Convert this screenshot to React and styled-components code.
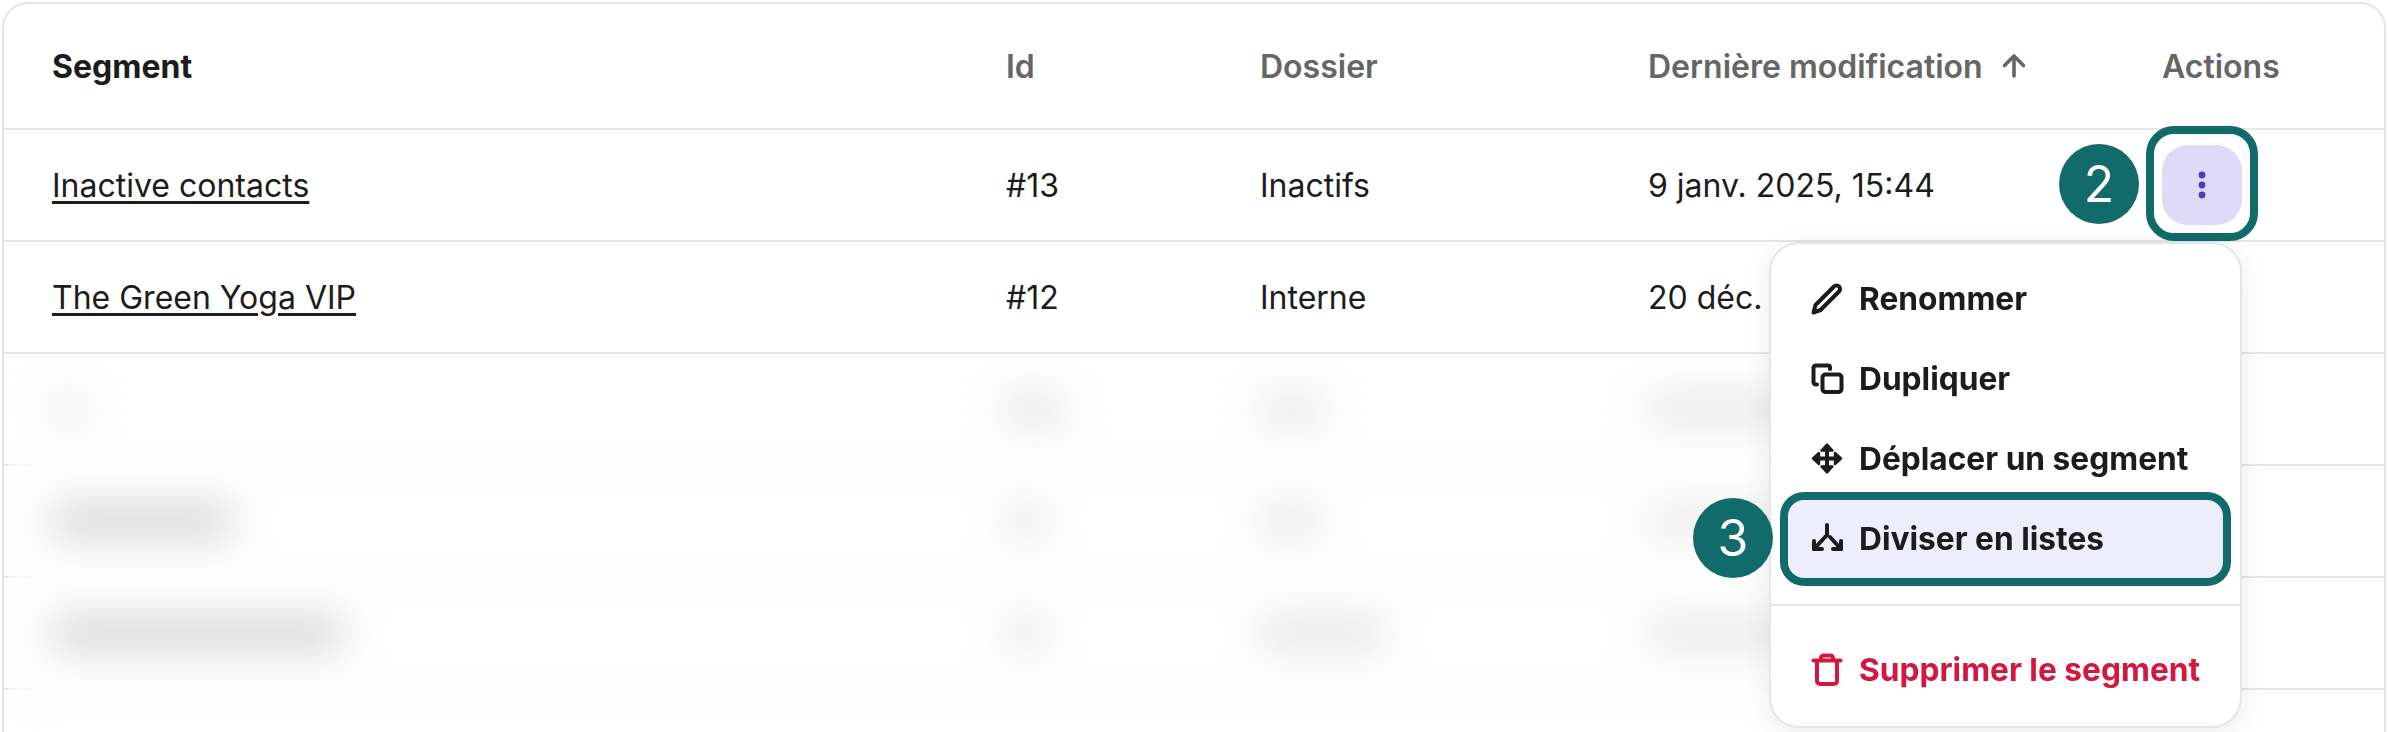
import React from "react";
import styled, { createGlobalStyle } from "styled-components";

const GlobalStyle = createGlobalStyle`
  html, body {
    margin: 0;
    height: 732px;
    overflow: hidden;
    background: #ffffff;
  }
  * { box-sizing: border-box; }
`;

const teal = "#126b6b";
const ink = "#1c1c1c";

const Card = styled.div`
  position: relative;
  margin: 2px;
  min-height: 900px;
  background: #fff;
  border: 2px solid #e5e5e5;
  border-radius: 26px;
  font-family: "Inter", "Liberation Sans", sans-serif;
  font-size: 32px;
  color: ${ink};
`;

const Row = styled.div`
  display: grid;
  grid-template-columns: 954px 254px 388px 514px 1fr;
  align-items: center;
  height: ${(p) => (p.$head ? "126px" : "112px")};
  padding-left: 48px;
  border-bottom: 2px solid #e5e5e5;
`;

const HeadCell = styled.div`
  display: flex;
  align-items: center;
  gap: 18px;
  font-weight: ${(p) => (p.$active ? 700 : 600)};
  color: ${(p) => (p.$active ? ink : "#666666")};
`;

const SegmentLink = styled.a`
  color: ${ink};
  text-decoration: underline;
  text-decoration-thickness: 3px;
  text-underline-offset: 4px;
`;

const Smudge = styled.span`
  display: block;
  width: ${(p) => p.$w}px;
  height: 24px;
  background: rgba(20, 20, 20, ${(p) => p.$a});
`;

const Veil = styled.div`
  position: absolute;
  left: 4px;
  top: 352px;
  width: 1790px;
  height: 550px;
  backdrop-filter: blur(22px);
`;

const MenuAnchor = styled.div`
  position: relative;
  width: 80px;
  height: 80px;
`;

const KebabButton = styled.button`
  position: relative;
  display: flex;
  align-items: center;
  justify-content: center;
  width: 80px;
  height: 80px;
  padding: 0;
  border: none;
  border-radius: 26px;
  background: #dedaf8;

  &::after {
    content: "";
    position: absolute;
    inset: -19px -16px -16px -16px;
    border: 8px solid ${teal};
    border-radius: 28px;
  }
`;

const StepBadge = styled.div`
  position: absolute;
  z-index: 3;
  left: ${(p) => p.$left}px;
  top: ${(p) => p.$top}px;
  display: flex;
  align-items: center;
  justify-content: center;
  width: 80px;
  height: 80px;
  border-radius: 50%;
  background: ${teal};
  color: #fff;
  font-size: 50px;
  font-weight: 400;
  line-height: 1;
`;

const Menu = styled.div`
  position: absolute;
  z-index: 2;
  left: -393px;
  top: 97px;
  width: 473px;
  height: 486px;
  padding: 14px 16px;
  background: #fff;
  border: 2px solid #e5e5e5;
  border-radius: 30px;
  box-shadow: 0 6px 28px rgba(0, 0, 0, 0.08);
`;

const MenuItem = styled.div`
  position: relative;
  display: flex;
  align-items: center;
  gap: 15px;
  height: 80px;
  padding-left: 21px;
  font-size: 31.7px;
  font-weight: 700;
  color: ${(p) => (p.$danger ? "#d3173f" : ink)};
  border-radius: 16px;
  background: ${(p) => (p.$selected ? "#eeedfb" : "transparent")};

  ${(p) =>
    p.$selected &&
    `&::after {
      content: "";
      position: absolute;
      inset: -6px -7px -8px -7px;
      border: 8px solid ${teal};
      border-radius: 24px;
    }`}
`;

const MenuDivider = styled.div`
  height: 2px;
  margin: 26px -16px 23px;
  background: #e5e5e5;
`;

const IconSvg = styled.svg`
  flex: none;
  width: 36px;
  height: 36px;
  fill: none;
  stroke: currentColor;
  stroke-width: 4;
  stroke-linecap: round;
  stroke-linejoin: round;
`;

const ArrowUpIcon = () => (
  <svg width="26" height="26" viewBox="0 0 26 26" fill="none" stroke="#666666" strokeWidth="3.6" strokeLinecap="round" strokeLinejoin="round">
    <path d="M13 23V3M3.5 12.5L13 3l9.5 9.5" />
  </svg>
);

const KebabIcon = () => (
  <svg width="8" height="30" viewBox="0 0 8 30" fill="#4e3db5">
    <circle cx="4" cy="5" r="3.4" />
    <circle cx="4" cy="15" r="3.4" />
    <circle cx="4" cy="25" r="3.4" />
  </svg>
);

const PencilIcon = () => (
  <IconSvg viewBox="0 0 36 36">
    <path d="M5.5 32.5L7.5 25 26 6.5a3.5 3.5 0 0 1 5 5L12.5 30z" />
  </IconSvg>
);

const CopyIcon = () => (
  <IconSvg viewBox="0 0 36 36">
    <rect x="14.5" y="14.5" width="19" height="17.5" rx="3" />
    <path d="M9 24.5H8a2.5 2.5 0 0 1-2.5-2.5V7.5A2.5 2.5 0 0 1 8 5.5h12a2 2 0 0 1 2 2V9" />
  </IconSvg>
);

const MoveIcon = () => (
  <IconSvg viewBox="0 0 36 36">
    <path d="M19 8v21M8 18.5h22" />
    <path fill="currentColor" strokeWidth="2.4" d="M19 4.5l-5.5 6h11zM19 32.5l-5.5-6h11zM5 18.5l6-5.5v11zM33 18.5l-6-5.5v11z" />
  </IconSvg>
);

const SplitIcon = () => (
  <IconSvg viewBox="0 0 36 36">
    <path d="M19 5v10L6 29M22 17l11 12" />
    <path d="M6 21v8h8M33 21v8h-8" />
  </IconSvg>
);

const TrashIcon = () => (
  <IconSvg viewBox="0 0 36 36">
    <path d="M5.5 9.5h27" />
    <path d="M13 9V7a2.5 2.5 0 0 1 2.5-2.5h7A2.5 2.5 0 0 1 25 7v2" />
    <path d="M9 10v20a3 3 0 0 0 3 3h14a3 3 0 0 0 3-3V10" />
  </IconSvg>
);

const blurredRows = [
  { segment: [34, 0.12], id: [56, 0.16], folder: [64, 0.14], date: [170, 0.14] },
  { segment: [180, 0.26], id: [40, 0.15], folder: [60, 0.14], date: [170, 0.12] },
  { segment: [290, 0.26], id: [40, 0.15], folder: [124, 0.16], date: [170, 0.14] },
];

export default function App() {
  return (
    <Card>
      <GlobalStyle />
      <Row $head>
        <HeadCell $active>Segment</HeadCell>
        <HeadCell>Id</HeadCell>
        <HeadCell>Dossier</HeadCell>
        <HeadCell>
          Dernière modification
          <ArrowUpIcon />
        </HeadCell>
        <HeadCell>Actions</HeadCell>
      </Row>

      <Row>
        <div>
          <SegmentLink>Inactive contacts</SegmentLink>
        </div>
        <div>#13</div>
        <div>Inactifs</div>
        <div>9 janv. 2025, 15:44</div>
        <div>
          <MenuAnchor>
            <StepBadge $left={-103} $top={-1}>2</StepBadge>
            <KebabButton aria-label="Actions">
              <KebabIcon />
            </KebabButton>
            <Menu>
              <MenuItem>
                <PencilIcon />
                Renommer
              </MenuItem>
              <MenuItem>
                <CopyIcon />
                Dupliquer
              </MenuItem>
              <MenuItem>
                <MoveIcon />
                Déplacer un segment
              </MenuItem>
              <MenuItem $selected>
                <StepBadge $left={-94} $top={0}>3</StepBadge>
                <SplitIcon />
                Diviser en listes
              </MenuItem>
              <MenuDivider />
              <MenuItem $danger>
                <TrashIcon />
                Supprimer le segment
              </MenuItem>
            </Menu>
          </MenuAnchor>
        </div>
      </Row>

      <Row>
        <div>
          <SegmentLink>The Green Yoga VIP</SegmentLink>
        </div>
        <div>#12</div>
        <div>Interne</div>
        <div>20 déc.</div>
        <div />
      </Row>

      {blurredRows.map((row, i) => (
        <Row key={i}>
          <Smudge $w={row.segment[0]} $a={row.segment[1]} />
          <Smudge $w={row.id[0]} $a={row.id[1]} />
          <Smudge $w={row.folder[0]} $a={row.folder[1]} />
          <Smudge $w={row.date[0]} $a={row.date[1]} />
          <div />
        </Row>
      ))}

      <Veil />
    </Card>
  );
}
